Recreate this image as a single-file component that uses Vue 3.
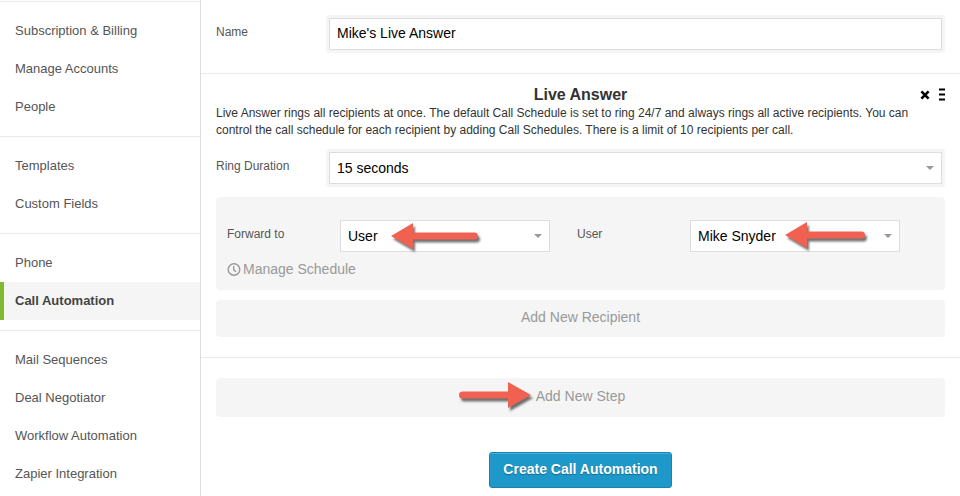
<script setup>
import { ref } from 'vue'

const groups = [
  ['Subscription & Billing', 'Manage Accounts', 'People'],
  ['Templates', 'Custom Fields'],
  ['Phone', 'Call Automation'],
  ['Mail Sequences', 'Deal Negotiator', 'Workflow Automation', 'Zapier Integration'],
]
const active = 'Call Automation'

const name = ref("Mike's Live Answer")
const duration = ref('15 seconds')
const forwardTo = ref('User')
const user = ref('Mike Snyder')
</script>

<template>
  <div class="layout">
    <nav class="sidebar" aria-label="Settings">
      <ul v-for="(group, i) in groups" :key="i" class="group">
        <li v-for="item in group" :key="item">
          <a href="#" class="link" :class="{ active: item === active }">{{ item }}</a>
        </li>
      </ul>
    </nav>

    <main class="main">
      <section class="block name-block">
        <div class="field">
          <label for="name">Name</label>
          <input id="name" v-model="name" class="control halo" type="text" />
        </div>
      </section>

      <section class="block step">
        <header class="step-head">
          <h2>Live Answer</h2>
          <div class="tools">
            <button type="button" class="tool" aria-label="Remove step">
              <svg width="10" height="10" viewBox="0 0 10 10"><path d="M1.4 1.4 8.6 8.6M8.6 1.4 1.4 8.6" stroke="#000" stroke-width="2.6" /></svg>
            </button>
            <button type="button" class="tool" aria-label="Reorder step">
              <svg width="6" height="13" viewBox="0 0 6 13"><path d="M0 1.5H6M0 6.5H6M0 11.5H6" stroke="#000" stroke-width="2" /></svg>
            </button>
          </div>
        </header>
        <p class="about">Live Answer rings all recipients at once. The default Call Schedule is set to ring 24/7 and always rings all active recipients. You can control the call schedule for each recipient by adding Call Schedules. There is a limit of 10 recipients per call.</p>

        <div class="field">
          <label for="duration">Ring Duration</label>
          <div class="select halo">
            <select id="duration" v-model="duration" class="control"><option>15 seconds</option></select>
          </div>
        </div>

        <div class="panel">
          <div class="columns">
            <div class="field">
              <label for="forward">Forward to</label>
              <div class="select">
                <select id="forward" v-model="forwardTo" class="control"><option>User</option></select>
                <svg class="arrow arrow-forward" width="96" height="34" viewBox="0 0 96 34" aria-hidden="true">
                  <path d="M1 15 23 2V11.5H84.5A3.5 3.5 0 0 1 84.5 18.5H23V28Z" />
                </svg>
              </div>
            </div>
            <div class="field">
              <label for="user">User</label>
              <div class="select">
                <select id="user" v-model="user" class="control"><option>Mike Snyder</option></select>
                <svg class="arrow arrow-user" width="90" height="34" viewBox="0 0 90 34" aria-hidden="true">
                  <path d="M1 15 23 2V11.5H77.5A3.5 3.5 0 0 1 77.5 18.5H23V28Z" />
                </svg>
              </div>
            </div>
          </div>
          <button type="button" class="schedule">
            <svg width="14" height="14" viewBox="0 0 14 14" fill="none" stroke="#999" stroke-width="1.4"><circle cx="7" cy="7.5" r="5.8" /><path d="M6.7 4V7.8L9 9.700" /></svg>
            Manage Schedule
          </button>
        </div>

        <button type="button" class="add add-recipient">Add New Recipient</button>
      </section>

      <section class="footer">
        <button type="button" class="add add-step">
          <span class="anchor">
            Add New Step
            <svg class="arrow arrow-step" width="82" height="34" viewBox="0 0 82 34" aria-hidden="true">
              <path d="M73 15 50 2V11.5H4.5A3.5 3.5 0 0 0 4.5 18.5H50V28Z" />
            </svg>
          </span>
        </button>
        <button type="button" class="create">Create Call Automation</button>
      </section>
    </main>
  </div>
</template>

<style>
body {
  margin: 0;
  background: #fff;
}
</style>

<style scoped>
* {
  box-sizing: border-box;
}
.layout {
  display: flex;
  min-height: 100vh;
  font-family: "Liberation Sans", Arial, sans-serif;
  font-size: 12px;
  color: #333;
}
button,
input,
select {
  font-family: inherit;
  margin: 0;
}
button {
  border: 0;
  padding: 0;
  background: none;
  cursor: pointer;
}
.sidebar {
  flex: none;
  width: 201px;
  padding-top: 1px;
  border-right: 1px solid #dcdcdc;
}
.group {
  list-style: none;
  margin: 0;
  padding: 10px 0;
  border-top: 1px solid #eaeaea;
}
.group:last-child {
  padding-bottom: 0;
}
.link {
  display: block;
  padding: 0 15px;
  font-size: 13px;
  line-height: 38px;
  color: #555;
  text-decoration: none;
}
.link.active {
  padding-left: 11px;
  border-left: 4px solid #7fba32;
  background: #f5f5f5;
  color: #444;
  font-weight: bold;
}
.main {
  flex: 1;
  min-width: 0;
}
.block {
  border-bottom: 1px solid #eaeaea;
}
.name-block {
  padding: 18px 15px 23px;
}
.field {
  display: flex;
  align-items: flex-start;
}
.field label {
  flex: none;
  width: 113px;
  line-height: 29px;
  color: #555;
}
.control {
  display: block;
  flex: 1;
  width: 100%;
  min-width: 0;
  height: 32px;
  padding: 0 7px;
  border: 1px solid #ddd;
  border-radius: 0;
  outline: 0;
  appearance: none;
  background: #fff;
  color: #000;
  font-size: 14px;
}
input.control {
  padding-bottom: 2px;
}
.halo {
  margin-right: 3px;
  border-radius: 1px;
  box-shadow: 0 0 0 3px #f5f5f5;
}
.select {
  position: relative;
  flex: 1;
  min-width: 0;
}
.select::after {
  content: "";
  position: absolute;
  top: 14px;
  right: 8px;
  border: 4px solid transparent;
  border-top-color: #999;
  border-bottom: 0;
  pointer-events: none;
}
.step {
  padding: 12px 15px 20px;
}
.step-head {
  position: relative;
}
.step-head h2 {
  margin: 0;
  font-size: 16px;
  line-height: 18px;
  text-align: center;
}
.tools {
  position: absolute;
  top: 2px;
  right: 0;
  display: flex;
  align-items: center;
  gap: 9px;
}
.tool svg {
  display: block;
}
.about {
  margin: 1px 0 13px;
  line-height: 17px;
}
.panel {
  margin-top: 13px;
  padding: 23px 18px 10px 11px;
  border-radius: 4px;
  background: #f5f5f5;
}
.columns {
  display: grid;
  grid-template-columns: 1fr 1fr;
}
.columns .field {
  padding-right: 27px;
}
.schedule {
  display: flex;
  align-items: center;
  gap: 2px;
  margin: 7px 0 1px;
  font-size: 14px;
  line-height: 20px;
  color: #999;
}
.add {
  display: block;
  width: 100%;
  border-radius: 4px;
  background: #f5f5f5;
  color: #999;
  font-size: 14px;
}
.add-recipient {
  margin-top: 10px;
  padding: 8px 0 11px;
  line-height: 18px;
}
.footer {
  padding: 20px 15px 8px;
}
.add-step {
  padding: 9px 0 12px;
  line-height: 18px;
}
.anchor {
  position: relative;
}
.create {
  display: block;
  margin: 35px auto 0;
  padding: 0 13px 2px;
  border: 1px solid #1585b0;
  border-radius: 3px;
  background: #1e98c8;
  box-shadow: inset 0 1px 0 #4bb0d8;
  color: #fff;
  font-size: 14px;
  font-weight: bold;
  line-height: 32px;
  text-shadow: 0 1px 1px #14698c;
}
.arrow {
  position: absolute;
  z-index: 1;
  fill: #f16152;
  filter: drop-shadow(2px 3px 1px rgba(0, 0, 0, 0.55));
  pointer-events: none;
}
.arrow-forward {
  top: 1px;
  left: 50px;
}
.arrow-user {
  top: 0;
  left: 94px;
}
.arrow-step {
  top: -8px;
  right: 85px;
}
</style>
